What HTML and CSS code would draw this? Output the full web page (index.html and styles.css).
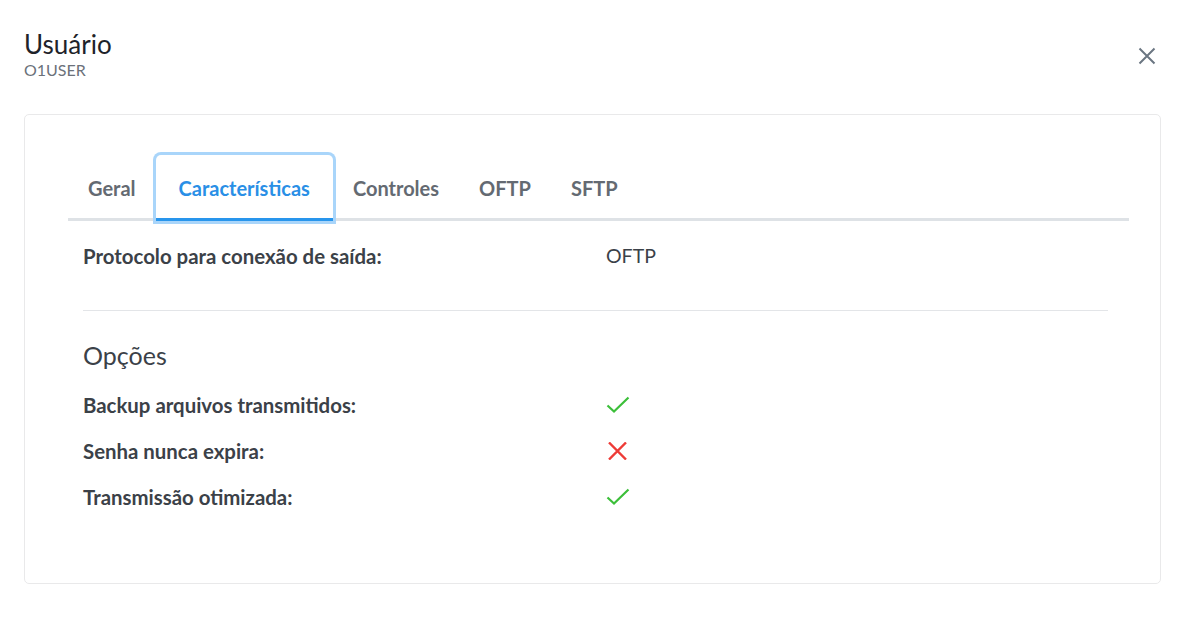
FILE: index.html
```html
<!DOCTYPE html>
<html lang="pt-BR">
<head>
<meta charset="utf-8">
<title>Usuário</title>
<link rel="stylesheet" href="styles.css">
</head>
<body>
<div class="modal">
  <header class="modal-header">
    <div class="titles">
      <h1 class="title">Usuário</h1>
      <div class="subtitle">O1USER</div>
    </div>
    <button class="close" aria-label="Fechar">
      <svg width="18" height="18" viewBox="0 0 18 18"><path d="M1.5 1.5 L16.5 16.5 M16.5 1.5 L1.5 16.5" stroke="#6b7682" stroke-width="2" fill="none"/></svg>
    </button>
  </header>

  <section class="card">
    <nav class="tabs">
      <a class="tab">Geral</a>
      <a class="tab active">Características</a>
      <a class="tab">Controles</a>
      <a class="tab">OFTP</a>
      <a class="tab">SFTP</a>
    </nav>

    <div class="pane">
      <div class="row first">
        <div class="label">Protocolo para conexão de saída:</div>
        <div class="value">OFTP</div>
      </div>
      <hr class="divider">
      <h2 class="section">Opções</h2>
      <div class="row opt">
        <div class="label">Backup arquivos transmitidos:</div>
        <div class="value"><svg class="icon" width="24" height="18" viewBox="0 0 24 18"><path d="M1.5 9.5 L8 15.5 L22.5 1.5" stroke="#3cbf3a" stroke-width="2.2" fill="none"/></svg></div>
      </div>
      <div class="row opt">
        <div class="label">Senha nunca expira:</div>
        <div class="value"><svg class="icon" width="24" height="18" viewBox="0 0 24 18"><path d="M3 0.5 L20 17.5 M20 0.5 L3 17.5" stroke="#ee3b37" stroke-width="2.4" fill="none"/></svg></div>
      </div>
      <div class="row opt">
        <div class="label">Transmissão otimizada:</div>
        <div class="value"><svg class="icon" width="24" height="18" viewBox="0 0 24 18"><path d="M1.5 9.5 L8 15.5 L22.5 1.5" stroke="#3cbf3a" stroke-width="2.2" fill="none"/></svg></div>
      </div>
    </div>
  </section>
</div>
</body>
</html>
```

FILE: styles.css
```css
* { box-sizing: border-box; }

html, body {
  margin: 0;
  background: #ffffff;
}

body {
  font-family: Lato, "Open Sans", "Liberation Sans", sans-serif;
  color: #3b4148;
}

.modal {
  padding: 29px 25px 0 24px;
}

.modal-header {
  display: flex;
  justify-content: space-between;
  align-items: flex-start;
}

.title {
  margin: 0;
  font-size: 26px;
  line-height: 30px;
  font-weight: 400;
  color: #1e232a;
}

.subtitle {
  font-size: 16px;
  line-height: 22px;
  color: #6b717a;
}

.close {
  border: 0;
  background: none;
  padding: 0;
  margin: 18px 5px 0 0;
  cursor: pointer;
  line-height: 0;
}

.card {
  margin-top: 33px;
  border: 1px solid #e9e9ea;
  border-radius: 5px;
  padding: 40px 31px 74px 43px;
}

.tabs {
  display: flex;
  border-bottom: 3px solid #dee2e6;
}

.tab {
  display: block;
  padding: 21px 20px 18px;
  line-height: 24px;
  font-size: 20px;
  font-weight: 700;
  color: #646a72;
  margin-bottom: -3px;
  border-bottom: 3px solid transparent;
  border-radius: 5px 5px 0 0;
}

.tab.active {
  padding-left: 23px;
  padding-right: 23px;
  color: #2a8fe6;
  border-bottom-color: #2895ec;
  box-shadow: 0 0 0 3px #a9d5fa;
}

.pane {
  padding: 0 21px 0 15px;
}

.row {
  display: grid;
  grid-template-columns: 523px 1fr;
  align-items: center;
  font-size: 20.4px;
  line-height: 24px;
}

.row.first {
  margin-top: 23px;
}

.label {
  font-weight: 700;
  color: #3b4148;
}

.value {
  color: #3b4148;
  line-height: 0;
}

.row.first .value {
  font-size: 19.5px;
  line-height: 24px;
}

.divider {
  margin: 42px 0 0;
  border: 0;
  border-top: 1px solid #e3e5e8;
}

.section {
  margin: 29px 0 0;
  font-size: 25px;
  line-height: 30px;
  font-weight: 400;
  color: #3b4148;
}

.row.opt {
  height: 24px;
  margin-top: 22px;
}

.section + .row.opt {
  margin-top: 23px;
}

.icon {
  display: block;
}
```
